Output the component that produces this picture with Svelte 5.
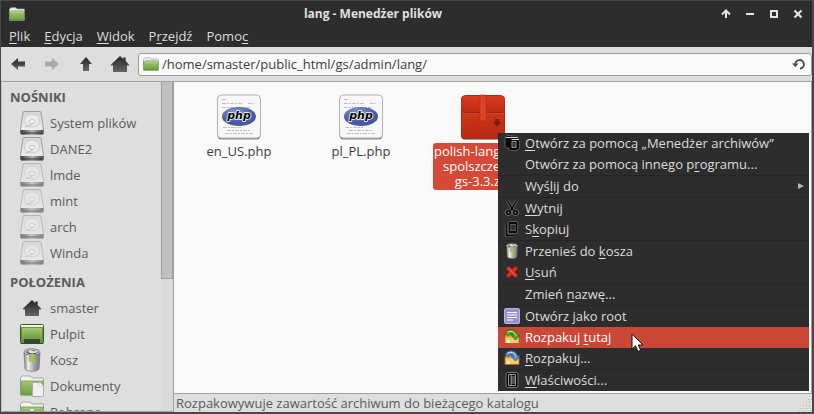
<script>
  const menus = [
    ['', 'P', 'lik'],
    ['', 'E', 'dycja'],
    ['', 'W', 'idok'],
    ['P', 'r', 'zejdź'],
    ['Pomo', 'c', '']
  ];
  const devices = [
    { name: 'System plików', mounted: true },
    { name: 'DANE2', mounted: true },
    { name: 'lmde' },
    { name: 'mint' },
    { name: 'arch' },
    { name: 'Winda' }
  ];
  const places = [
    { name: 'smaster', icon: 'home' },
    { name: 'Pulpit', icon: 'desktop' },
    { name: 'Kosz', icon: 'trash' },
    { name: 'Dokumenty', icon: 'documents' },
    { name: 'Pobrane', icon: 'downloads' }
  ];
  const groups = [
    [
      { icon: 'archive', label: ['', 'O', 'twórz za pomocą „Menedżer archiwów”'] },
      { label: ['Otwórz za pomocą innego p', 'r', 'ogramu...'] }
    ],
    [{ label: ['Wyś', 'l', 'ij do'], submenu: true }],
    [
      { icon: 'cut', label: ['', 'W', 'ytnij'] },
      { icon: 'copy', label: ['S', 'k', 'opiuj'] }
    ],
    [
      { icon: 'trash', label: ['Przenieś do ', 'k', 'osza'] },
      { icon: 'delete', label: ['', 'U', 'suń'] }
    ],
    [{ label: ['Zmień ', 'n', 'azwę...'] }],
    [
      { icon: 'root', label: ['Otwórz jako root', '', ''] },
      { icon: 'extract', label: ['Rozpakuj ', 't', 'utaj'], active: true },
      { icon: 'extractTo', label: ['', 'R', 'ozpakuj...'] }
    ],
    [{ icon: 'properties', label: ['', 'W', 'łaściwości...'] }]
  ];
  let path = $state('/home/smaster/public_html/gs/admin/lang/');
</script>

<svg class="defs" width="0" height="0" aria-hidden="true">
  <defs>
    <linearGradient id="dark" x1="0" y1="0" x2="0" y2="1"><stop offset="0" stop-color="#252525" /><stop offset="1" stop-color="#656565" /></linearGradient>
    <linearGradient id="green" x1="0" y1="0" x2="0" y2="1"><stop offset="0" stop-color="#a5ca70" /><stop offset="1" stop-color="#6b9c42" /></linearGradient>
    <linearGradient id="metal"><stop offset="0" stop-color="#8c8c90" /><stop offset=".3" stop-color="#e9e9ec" /><stop offset=".6" stop-color="#a7a7ad" /><stop offset="1" stop-color="#77777b" /></linearGradient>
    <linearGradient id="plate" x1="0" y1="0" x2="0" y2="1"><stop offset="0" stop-color="#d4d4d4" /><stop offset="1" stop-color="#f4f4f4" /></linearGradient>
    <linearGradient id="rim"><stop offset="0" stop-color="#3e3e3e" /><stop offset=".5" stop-color="#b5b5b5" /><stop offset="1" stop-color="#484848" /></linearGradient>
    <radialGradient id="phpBlue" cx=".4" cy=".3"><stop offset="0" stop-color="#8b9bd1" /><stop offset="1" stop-color="#465aa2" /></radialGradient>
    <linearGradient id="red" x1="0" y1="0" x2="0" y2="1"><stop offset="0" stop-color="#e03c1d" /><stop offset="1" stop-color="#b52a12" /></linearGradient>
    <linearGradient id="redTop" x1="0" y1="0" x2="0" y2="1"><stop offset="0" stop-color="#dd3a1c" /><stop offset="1" stop-color="#bb2c14" /></linearGradient>
  </defs>
</svg>

{#snippet folder(w, h)}
  <svg width={w} height={h} viewBox="0 0 16 14" preserveAspectRatio="none" aria-hidden="true">
    <path d="M.5 13.2V2.3L1.8.7H7L8 2h7.3v11.2z" fill="#f1f3ed" stroke="#a3ab98" stroke-width=".7" />
    <path d="M2 3.4h12" stroke="#a4a8a0" stroke-width=".6" />
    <path d="M.7 4.3h14.6v8.9H.7z" fill="url(#green)" stroke="#648442" stroke-width=".6" />
    <path d="M1.2 4.8h13.6" stroke="#c8dfa6" stroke-width=".7" />
  </svg>
{/snippet}

{#snippet house(w, h)}
  <svg width={w} height={h} viewBox="0 0 18 16" aria-hidden="true">
    <path d="M9 0l3.2 2.9V1.4h2.5v3.7L18 8.6v1h-2V16H2V9.6H0v-1z" fill="url(#dark)" />
  </svg>
{/snippet}

{#snippet label(parts)}{parts[0]}<u>{parts[1]}</u>{parts[2]}{/snippet}

{#snippet trash(w, h)}
  <svg width={w} height={h} viewBox="0 0 18 24" aria-hidden="true">
    <path d="M1 4l1 17c2 3 12 3 14 0l1-17z" fill="url(#metal)" stroke="#78787c" stroke-width=".7" />
    <ellipse cx="9" cy="4" rx="8" ry="3.2" fill="#d8d8da" stroke="#68686b" stroke-width=".8" />
    <ellipse cx="9" cy="4.1" rx="6" ry="1.9" fill="#3f4042" />
    <path d="M4 4l4-2 3 1.5 3-1v2l-5 1z" fill="#e7e8e4" />
    <path d="M6 8l3-2 3 2-1 3 2 1-3 3-1-2-3 1-1-4z" fill="#9ac54e" />
    <path d="M5 8v13" stroke="#fff" stroke-opacity=".7" />
  </svg>
{/snippet}

{#snippet placeIcon(kind)}
  {#if kind === 'home'}
    {@render house(18, 16)}
  {:else if kind === 'trash'}
    {@render trash(18, 24)}
  {:else}
    <svg width="24" height="24" viewBox="0 0 24 24" aria-hidden="true">
      {#if kind === 'desktop'}
        <rect x=".5" y="2.5" width="23" height="19" rx="1" fill="#69963f" stroke="#3d5725" />
        <path d="M1 3h22v2H1z" fill="#f1f1ef" />
        <path d="M2 6h20v11H2z" fill="url(#green)" />
        <path d="M4 17h16v4H4z" fill="#3b4435" />
        <path d="M1 21.5h22" stroke="#314b20" />
      {:else}
        <path d="M.5 21V4l1.5-2h8l2 2h11.500v17z" fill="#f2f4ef" stroke="#a3a9a0" />
        <path d="M1 7h22v14H1z" fill="url(#green)" stroke="#6d8d4c" stroke-width=".7" />
        {#if kind === 'documents'}
          <path d="M12.500 8.500H20l3.500 3.500v10.500h-11z" fill="#f0f0f0" stroke="#aaa" />
          <path d="M19 8v4h4" fill="#fff" stroke="#bbb" stroke-width=".7" />
        {:else}
          <path d="M12 9v8M8 13l4 4 4-4" stroke="#edf3e6" stroke-width="3" fill="none" />
        {/if}
      {/if}
    </svg>
  {/if}
{/snippet}

{#snippet menuIcon(kind)}
  {#if kind === 'trash'}
    {@render trash(12, 16)}
  {:else if kind}
    <svg width="16" height="16" viewBox="0 0 16 16" aria-hidden="true">
      {#if kind === 'archive'}
        <path d="M1 3.500V11q0 2 2 2h2v1q0 1.500 1.500 1.500h6.500l2.500-2V5.500L14 4V2.500L12.500 1H7L6 .5H2.500L1 2z" fill="#0a0a0a" stroke="#6a6a6a" stroke-width=".8" />
        <path d="M2 2.500h11.500M7.500 4.500H15" stroke="#ddd" />
        <path d="M8 6.500h4v6H8z" fill="#272727" stroke="#929292" />
        <path d="M9 9h2M9 11h2" stroke="#555" />
      {:else if kind === 'cut'}
        <g fill="none" stroke="#8a8a8a" stroke-width="3"><path d="M3.500 1l6 9.500M12.500 1l-6 9.500" /><circle cx="4.500" cy="12.500" r="1.800" /><circle cx="11.500" cy="12.500" r="1.800" /></g>
        <g fill="none" stroke="#080808" stroke-width="1.700"><path d="M3.500 1l6 9.500M12.500 1l-6 9.500" /><circle cx="4.500" cy="12.500" r="1.800" /><circle cx="11.500" cy="12.500" r="1.800" /></g>
      {:else if kind === 'copy'}
        <g fill="none" stroke="#8a8a8a" stroke-width="3.200" stroke-linejoin="round"><path d="M2.500 4v10.500H10" /><path d="M5.500 2h7v9h-7z" /></g>
        <g fill="none" stroke="#080808" stroke-width="2" stroke-linejoin="round"><path d="M2.500 4v10.500H10" /><path d="M5.500 2h7v9h-7z" /></g>
      {:else if kind === 'delete'}
        <path d="M4.500 2L8 5l3.500-3L14 4.500 11 8l3 3.500-2.500 2.500L8 11l-3.500 3L2 11.500 5 8 2 4.500z" fill="#d5321f" stroke="#861811" />
        <path d="M4.500 4l7 8" stroke="#f06050" />
      {:else if kind === 'root'}
        <rect x=".5" y=".5" width="15" height="15" rx="1.500" fill="#9a91cf" stroke="#bdb6e4" />
        <path d="M3 4.500h10M3 7h10M3 9.500h10M3 12h6" stroke="#fff" stroke-width="1.200" />
      {:else if kind === 'extract' || kind === 'extractTo'}
        <path d="M1 7l1.500-2h11L15 7v7.500H1z" fill="#dca642" stroke="#a16a20" />
        <path d="M1.500 8.500h13v5.500h-13z" fill="#f2cb72" />
        <path d="M3 11h3v3H3z" fill="#fff0bc" />
        <path d="M1 4.500Q4-.5 9 1q4 1 4.500 5H16l-4.500 5L7 6h2.500Q8.500 4 6 4.500L4.500 7z" fill={kind === 'extract' ? '#57a52a' : '#588fce'} stroke={kind === 'extract' ? '#286d15' : '#254f8e'} stroke-width=".8" />
        <path d="M3.500 3q6-2.500 8.500 3.500" fill="none" stroke="#e1f1da" stroke-width=".9" />
      {:else if kind === 'properties'}
        <rect x="2" y=".5" width="12" height="15" rx="1.500" fill="#050505" stroke="#777" />
        <path d="M4.500 2.500h7v11h-7zM7 3v10M7 5h4M7 7h4M7 9h4M7 11h4" fill="none" stroke="#aaa" stroke-width=".9" />
      {/if}
    </svg>
  {/if}
{/snippet}

<div class="window">
  <header class="titlebar">
    {@render folder(16, 14)}
    <h1>lang - Menedżer plików</h1>
    <div class="controls">
      <button aria-label="Zwiń"><svg width="10" height="10" viewBox="0 0 10 10"><path d="M5 9V2M1 5.500l4-4 4 4" fill="none" stroke="#e4e4e4" stroke-width="2" /></svg></button>
      <button aria-label="Minimalizuj"><svg width="10" height="10" viewBox="0 0 10 10"><path d="M1 5h8" stroke="#e4e4e4" stroke-width="2" /></svg></button>
      <button aria-label="Maksymalizuj"><svg width="10" height="10" viewBox="0 0 10 10"><path d="M2 2h6v6H2z" fill="none" stroke="#e4e4e4" stroke-width="2" /></svg></button>
      <button aria-label="Zamknij"><svg width="10" height="10" viewBox="0 0 10 10"><path d="M1.500 1.500l7 7M8.500 1.500l-7 7" stroke="#e4e4e4" stroke-width="2.200" /></svg></button>
    </div>
  </header>

  <nav class="menubar" aria-label="Menu główne">
    {#each menus as m}<button>{@render label(m)}</button>{/each}
  </nav>

  <div class="toolbar">
    <button aria-label="Wstecz"><svg width="14" height="12" viewBox="0 0 14 12"><path d="M0 6l7-6v3.500h7v5H7V12z" fill="url(#dark)" /></svg></button>
    <button aria-label="Dalej" disabled><svg width="14" height="12" viewBox="0 0 14 12"><path d="M14 6L7 0v3.500H0v5h7V12z" fill="#aaa" /></svg></button>
    <button aria-label="Do góry"><svg width="12" height="14" viewBox="0 0 12 14"><path d="M6 0l6 7H9v7H3V7H0z" fill="url(#dark)" /></svg></button>
    <button aria-label="Katalog domowy">{@render house(18, 16)}</button>
    <div class="location">
      {@render folder(16, 14)}
      <input aria-label="Położenie" bind:value={path} spellcheck="false" />
      <button aria-label="Odśwież"><svg width="14" height="12" viewBox="0 0 14 12"><path d="M3.300 6.500A4.300 4.300 0 1 1 8 10.600" fill="none" stroke="#444" stroke-width="1.800" /><path d="M0 5.500h6.500L3.300 9z" fill="#444" /></svg></button>
    </div>
  </div>

  <div class="body">
    <aside>
      <div class="places">
        <h2>NOŚNIKI</h2>
        <ul>
          {#each devices as d}
            <li><a href="#{d.name}">
              <span class="slot" class:faded={!d.mounted}>
                <svg width="24" height="24" viewBox="0 0 24 24" aria-hidden="true">
                  <path d="M3 1.500Q3 .5 4 .5h16q1 0 1 1l2.500 17V22q0 1.500-1.500 1.500H2Q.5 23.500.5 22v-3.500z" fill="url(#plate)" stroke="#8f8f8f" stroke-width=".8" />
                  <path d="M.5 19h23v3q0 1.500-1.500 1.500H2Q.5 23.500.5 22z" fill="url(#rim)" />
                  <path d="M2 22h20" stroke="#333" />
                  <ellipse cx="12" cy="9.500" rx="7.500" ry="6.500" fill="#ececec" stroke="#cbcbcb" />
                  <ellipse cx="12" cy="10.500" rx="3" ry="2" fill="#f6f6f6" stroke="#b6b6b6" stroke-width=".8" />
                  <path d="M5 16l5-1.500 3-2" fill="none" stroke="#bcbcbc" />
                </svg>
              </span>{d.name}
            </a></li>
          {/each}
        </ul>
        <h2>POŁOŻENIA</h2>
        <ul>
          {#each places as p}
            <li><a href="#{p.name}"><span class="slot">{@render placeIcon(p.icon)}</span>{p.name}</a></li>
          {/each}
        </ul>
      </div>
      <div class="scrollbar"><div class="thumb"></div></div>
    </aside>

    <div class="main">
      <main>
        {#each ['en_US.php', 'pl_PL.php'] as name}
          <a class="file" href="#{name}">
            <svg width="48" height="48" viewBox="0 0 48 48" aria-hidden="true">
              <rect x="2.500" y="3" width="43" height="43.500" rx="4" fill="#878787" />
              <rect x="2.500" y="2" width="43" height="43" rx="4" fill="#f7f7f7" stroke="#b1b1b1" />
              <path d="M7 6.500h5M7 10.500h20M33 10.500h6M7 14.500h29M8 34.500h18M12 37.500h24M10 40.500h29" stroke="#aaa" stroke-width="1" stroke-dasharray="4 1 2 1" opacity=".7" />
              <ellipse cx="24" cy="23.500" rx="17" ry="9.500" fill="url(#phpBlue)" />
              <text x="24" y="26" text-anchor="middle" class="php">php</text>
            </svg>
            <span>{name}</span>
          </a>
        {/each}
        <a class="file selected" href="#zip">
          <svg width="48" height="48" viewBox="0 0 48 48" aria-hidden="true">
            <rect x="2" y="3" width="44" height="43.500" rx="4" fill="#8f2a1b" />
            <rect x="2.500" y="2.500" width="43" height="43" rx="4" fill="url(#red)" stroke="#a82b17" />
            <path d="M6.500 3h35q4 0 4 4v13h-43V7q0-4 4-4z" fill="url(#redTop)" />
            <path d="M5 19.500h38" stroke="#9c2812" /><path d="M3 20.500h42" stroke="#e04a2e" stroke-width=".6" />
            <path d="M21 2h6v26h-6z" fill="#dd4528" stroke="#ae2b15" stroke-width=".6" />
            <path d="M36 26h4v3h2.500L38 33.500 33.500 29H36z" fill="#7e1d0e" />
          </svg>
          <span>polish-lang-pack-<br />spolszczenie-<br />gs-3.3.zip</span>
        </a>
      </main>
      <footer>
        <span>Rozpakowywuje zawartość archiwum do bieżącego katalogu</span>
        <svg width="14" height="14" viewBox="0 0 14 14" aria-hidden="true"><path d="M10 1.500h4M8 4.500h6M5 7.500h9M3 10.500h11M1 13h13" stroke="#b4b4b4" stroke-dasharray="1 2" /></svg>
      </footer>
    </div>
  </div>

  <div class="context" role="menu">
    {#each groups as g}
      <div class="group" role="group">
        {#each g as item}
          <button role="menuitem" class:active={item.active}>
            <span class="micon">{@render menuIcon(item.icon)}</span>
            <span class="mlabel">{@render label(item.label)}</span>
            {#if item.submenu}<svg width="6" height="6" viewBox="0 0 6 6" aria-hidden="true"><path d="M0 0l6 3-6 3z" fill="#b5b5b5" /></svg>{/if}
          </button>
        {/each}
      </div>
    {/each}
  </div>

  <svg class="cursor" width="13" height="20" viewBox="0 0 13 20" aria-hidden="true"><path d="M1 1v15l3.500-3.200L7 18.500l2.700-1.200L7.200 12H12z" fill="#fff" stroke="#111" /></svg>
</div>

<style>
  :global(body) { margin: 0; }
  * { box-sizing: border-box; }
  svg { display: block; flex: none; }
  .defs { position: absolute; }
  button { border: 0; padding: 0; background: none; font: inherit; color: inherit; }
  a { color: inherit; text-decoration: none; }
  ul { list-style: none; margin: 0; padding: 0; }
  u { text-decoration-thickness: 1px; text-underline-offset: 2px; text-decoration-skip-ink: none; }

  .window {
    position: relative;
    display: flex;
    flex-direction: column;
    height: 100vh;
    border: 1px solid #484848;
    border-width: 1px 2px 2px 1px;
    background: #dedede;
    color: #3c3c3c;
    font: 13px/18px "Open Sans", "Noto Sans", sans-serif;
    overflow: hidden;
  }
  .titlebar {
    display: flex;
    align-items: center;
    height: 25px;
    padding: 0 9px 0 8px;
    background: #2d2d2d;
    color: #e0e0e0;
  }
  h1 { flex: 1; margin: 0; font-size: 12px; line-height: 18px; text-align: center; }
  .controls { display: flex; gap: 14px; }
  .menubar {
    display: flex;
    gap: 14px;
    height: 21px;
    padding: 0 8px 2px;
    background: #2d2d2d;
    color: #dcdcdc;
  }
  .toolbar {
    display: flex;
    align-items: center;
    height: 34px;
  }
  .toolbar > button { display: flex; justify-content: center; width: 34px; }
  .location {
    flex: 1;
    display: flex;
    align-items: center;
    gap: 3px;
    height: 23px;
    margin-left: 1px;
    padding: 0 5px 0 4px;
    border: 1px solid #999;
    border-radius: 3px;
    background: #f9f9f9;
  }
  .location input {
    flex: 1;
    min-width: 0;
    padding: 0;
    border: 0;
    outline: 0;
    background: none;
    color: #3c3c3c;
    font: inherit;
  }
  .body { flex: 1; display: flex; min-height: 0; }
  aside {
    display: flex;
    width: 173px;
    border: 1px solid #a0a0a0;
    border-left-color: #c4c4c4;
    overflow: hidden;
  }
  .places { flex: 1; color: #5b5b5b; }
  h2 {
    margin: 0;
    padding: 1px 0 0 8px;
    font-size: 13px;
    line-height: 28px;
  }
  li a { display: flex; align-items: center; gap: 6px; height: 26px; padding: 0 0 2px 18px; }
  .slot { display: flex; justify-content: center; width: 24px; }
  .faded { opacity: .6; }
  .scrollbar { width: 12px; background: #dadada; }
  .thumb { height: 60%; border: 1px solid #a0a0a0; border-top: 0; background: #c1c1c1; }
  .main { flex: 1; display: flex; flex-direction: column; min-width: 0; }
  main {
    flex: 1;
    display: flex;
    gap: 22px;
    align-items: flex-start;
    padding: 11px 15px;
    border: 1px solid #a0a0a0;
    border-left: 0;
    background: #f9f9f9;
  }
  .file { display: flex; flex-direction: column; align-items: center; gap: 2px; width: 100px; }
  .file span { padding: 1px; line-height: 15px; text-align: center; white-space: nowrap; }
  .selected span { width: 100px; border-radius: 3px; background: #d64937; color: #fff; }
  .php { font: italic bold 11px "DejaVu Sans", sans-serif; fill: #000; stroke: #fff; stroke-width: 1.500px; paint-order: stroke; }
  footer {
    display: flex;
    align-items: flex-end;
    justify-content: space-between;
    height: 18px;
    padding-left: 2px;
    color: #5b5b5b;
  }
  .context {
    position: absolute;
    right: 3px;
    top: 132px;
    width: 311px;
    background: #2d2d2d;
    color: #dcdcdc;
  }
  .group + .group { border-top: 1px solid #262626; }
  .group button {
    display: flex;
    align-items: center;
    gap: 5px;
    width: 100%;
    height: 21px;
    padding: 0 5px 2px 6px;
    text-align: left;
  }
  .group .active { background: #cb4837; color: #fff; }
  .micon { display: flex; justify-content: center; width: 16px; }
  .mlabel { flex: 1; }
  .cursor { position: absolute; left: 630px; top: 332px; }
</style>
